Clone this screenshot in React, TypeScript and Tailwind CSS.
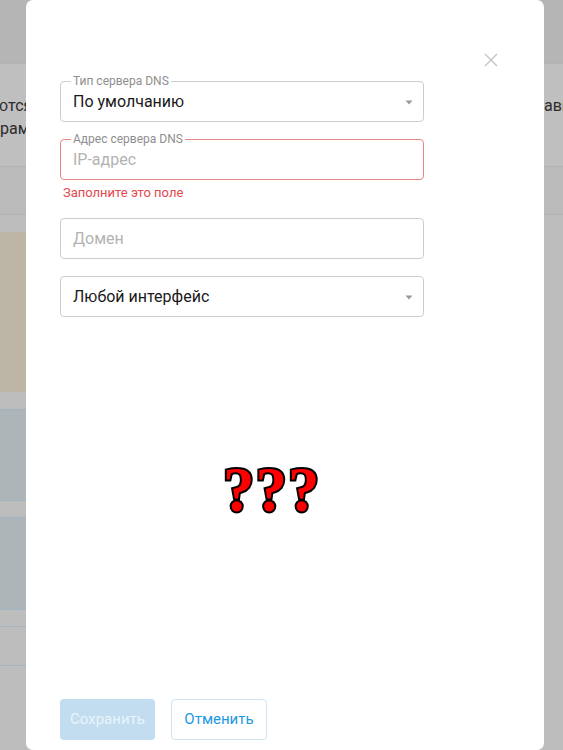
import React from "react";

function Caret() {
  return (
    <svg width="8" height="5" viewBox="0 0 8 5" className="absolute right-[10px] top-[18px]">
      <path d="M0.5 0.5 L7.5 0.5 L4 4.5 Z" fill="#9a9a9a" />
    </svg>
  );
}

function Field({
  legend,
  value,
  placeholder,
  error,
  select,
}: {
  legend?: string;
  value?: string;
  placeholder?: string;
  error?: boolean;
  select?: boolean;
}) {
  return (
    <div
      className={`relative h-[41px] w-[364px] rounded-[4px] border flex items-center pl-[12px] ${
        error ? "border-[#ec8586]" : "border-[#cdcdcd]"
      }`}
    >
      {legend && (
        <span className="absolute left-[10px] top-[-8px] bg-white px-[2px] text-[12px] leading-[14px] text-[#8e8e8e]">
          {legend}
        </span>
      )}
      {value ? (
        <span className="text-[16px] text-[#1a1a1a]">{value}</span>
      ) : (
        <span className="text-[16px] text-[#b3b3b3]">{placeholder}</span>
      )}
      {select && <Caret />}
    </div>
  );
}

export default function App() {
  return (
    <div
      className="relative w-[563px] h-[750px] overflow-hidden bg-[#bdbdbd]"
      style={{ fontFamily: "Roboto, 'Noto Sans', sans-serif" }}
    >
      {/* background page under overlay */}
      <div className="flex flex-col">
        <div className="h-[64px] bg-[#b5b5b5] border-b border-[#b2b2b2]" />
        <div className="h-[103px] bg-[#bfbfbf] border-b border-[#b3b3b3] flex justify-between pt-[30px] text-[16px] leading-[23px] text-[#2b2b2b]">
          <div className="flex flex-col">
            <span className="ml-[-5px] whitespace-nowrap">ются</span>
            <span>рам</span>
          </div>
          <div className="w-[19px] overflow-hidden whitespace-nowrap">
            <span>авил</span>
          </div>
        </div>
        <div className="h-[48px] bg-[#bababa] border-b border-[#b3b3b3]" />
        <div className="flex">
          <div className="w-[300px] flex flex-col">
            <div className="h-[17px] bg-[#bdbdbd]" />
            <div className="h-[160px] bg-[#bdb6a6]" />
            <div className="h-[17px] bg-[#bdbdbd]" />
            <div className="h-[92px] bg-[#adb5b9] border-y border-[#9fb3c0]" />
            <div className="h-[16px] bg-[#bdbdbd]" />
            <div className="h-[93px] bg-[#adb5b9] border-y border-[#9fb3c0]" />
            <div className="h-[16px] bg-[#bdbdbd]" />
            <div className="h-[40px] bg-[#bdbdbd] border-y border-[#a4b4bf]" />
          </div>
        </div>
      </div>

      {/* modal */}
      <div className="absolute left-[26px] top-0 w-[518px] h-[750px] bg-white rounded-[7px] flex flex-col pl-[34px] pt-[81px] pb-[10px]">
        <svg
          width="14"
          height="14"
          viewBox="0 0 14 14"
          className="absolute right-[46px] top-[53px]"
        >
          <path d="M1 1 L13 13 M13 1 L1 13" stroke="#c4c4c4" strokeWidth="1.4" />
        </svg>

        <Field legend="Тип сервера DNS" value="По умолчанию" select />
        <div className="h-[17px]" />
        <Field legend="Адрес сервера DNS" placeholder="IP-адрес" error />
        <div className="pl-[3px] pt-[5px] h-[38px] text-[13px] leading-[16px] text-[#e5484d]">
          Заполните это поле
        </div>
        <Field placeholder="Домен" />
        <div className="h-[17px]" />
        <Field value="Любой интерфейс" select />

        <div className="mt-[141px] ml-[163px]">
          <span
            className="text-[63px] leading-[64px] font-bold text-[#ff0000] tracking-[1px]"
            style={{
              fontFamily: "'Liberation Serif', serif",
              WebkitTextStroke: "4px black",
              paintOrder: "stroke fill",
            }}
          >
            ???
          </span>
        </div>

        <div className="mt-auto flex gap-[16px]">
          <button className="h-[41px] w-[95px] rounded-[4px] bg-[#c1ddef] text-[15px] text-[#eaf4fb]">
            Сохранить
          </button>
          <button className="h-[41px] w-[96px] rounded-[4px] border border-[#cfe5f4] bg-white text-[15px] text-[#1b98e2]">
            Отменить
          </button>
        </div>
      </div>
    </div>
  );
}
